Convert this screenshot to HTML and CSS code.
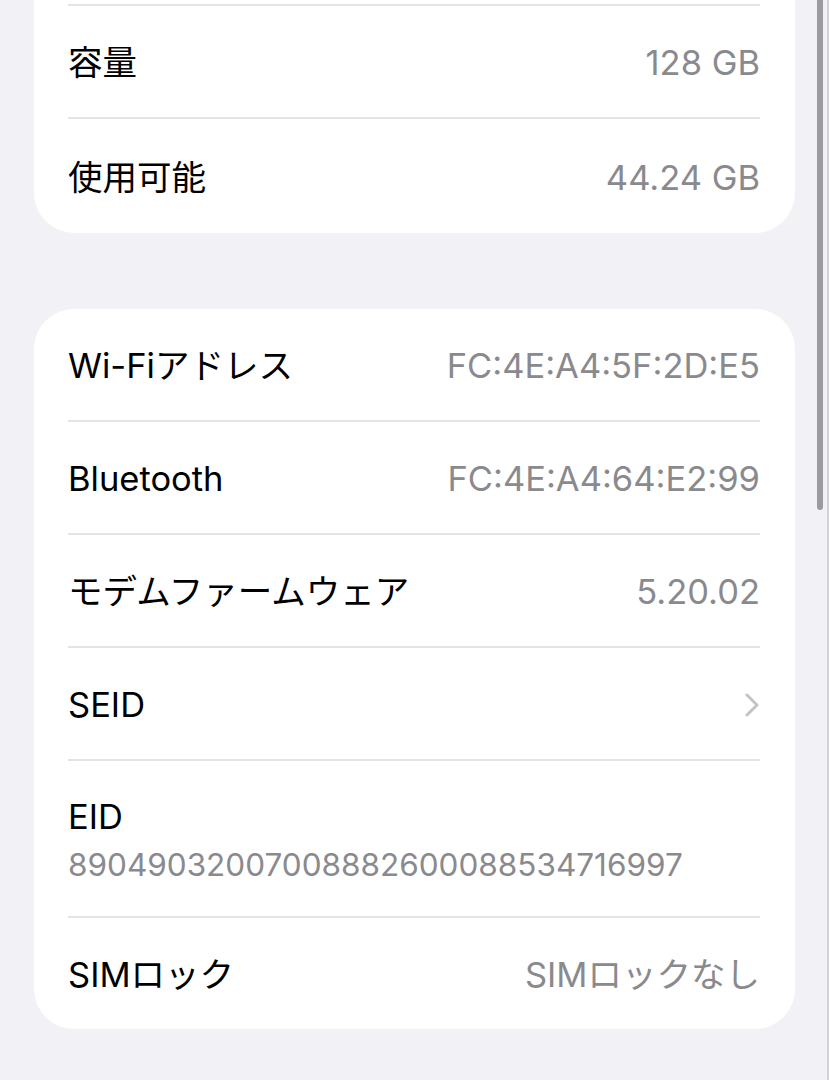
FILE: index.html
```html
<!DOCTYPE html>
<html lang="ja">
<head>
<meta charset="utf-8">
<link rel="stylesheet" href="styles.css">
</head>
<body>
<div class="page">
  <div class="card card-cut">
    <div class="sep"></div>
    <div class="row"><span class="label">容量</span><span class="value">128 GB</span></div>
    <div class="sep"></div>
    <div class="row"><span class="label">使用可能</span><span class="value">44.24 GB</span></div>
  </div>
  <div class="card card-full">
    <div class="row"><span class="label">Wi-Fiアドレス</span><span class="value">FC:4E:A4:5F:2D:E5</span></div>
    <div class="sep"></div>
    <div class="row"><span class="label">Bluetooth</span><span class="value">FC:4E:A4:64:E2:99</span></div>
    <div class="sep"></div>
    <div class="row"><span class="label">モデムファームウェア</span><span class="value">5.20.02</span></div>
    <div class="sep"></div>
    <div class="row"><span class="label">SEID</span>
      <svg class="chev" width="16" height="24" viewBox="0 0 16 24"><path d="M3 2 L13 12 L3 22" fill="none" stroke="#c4c4c7" stroke-width="3" stroke-linecap="round" stroke-linejoin="round"/></svg>
    </div>
    <div class="sep"></div>
    <div class="row-stack"><span class="label">EID</span><span class="value num">89049032007008882600088534716997</span></div>
    <div class="sep"></div>
    <div class="row"><span class="label">SIMロック</span><span class="value">SIMロックなし</span></div>
  </div>
</div>
<div class="scroll-thumb"></div>
<div class="edge-line"></div>
</body>
</html>
```

FILE: styles.css
```css
html, body {
  margin: 0;
  padding: 0;
  background: #f2f1f6;
  height: 100%;
  overflow: hidden;
}
body {
  font-family: "Inter", "Noto Sans CJK JP", sans-serif;
  -webkit-font-smoothing: antialiased;
}
.page {
  padding: 0 34px;
  display: flex;
  flex-direction: column;
  gap: 76px;
}
.card {
  background: #ffffff;
  border-radius: 40px;
  padding: 0 35px 0 34px;
}
.card-cut {
  border-top-left-radius: 0;
  border-top-right-radius: 0;
  padding-top: 4px;
}
.sep {
  height: 2px;
  background: #e4e4e7;
}
.row {
  box-sizing: border-box;
  height: 111px;
  padding-top: 3px;
  display: flex;
  align-items: center;
  justify-content: space-between;
}
.card-cut .row:last-child {
  height: 114px;
}
.row-stack {
  box-sizing: border-box;
  height: 155px;
  padding-top: 4px;
  display: flex;
  flex-direction: column;
  justify-content: center;
  gap: 8px;
}
.label {
  color: #000000;
  font-size: 34.5px;
  line-height: 40px;
}
.value {
  color: #8a8a8e;
  font-size: 34.5px;
  line-height: 40px;
}
.num {
  font-size: 31.5px;
  line-height: 40px;
}
.chev {
  display: block;
}
.scroll-thumb {
  position: fixed;
  top: -10px;
  left: 817px;
  width: 6px;
  height: 520px;
  border-radius: 3px;
  background: #9b9aa0;
}
.edge-line {
  position: fixed;
  top: 0;
  right: 0;
  width: 2px;
  height: 100%;
  background: #d4d4d8;
}
```
